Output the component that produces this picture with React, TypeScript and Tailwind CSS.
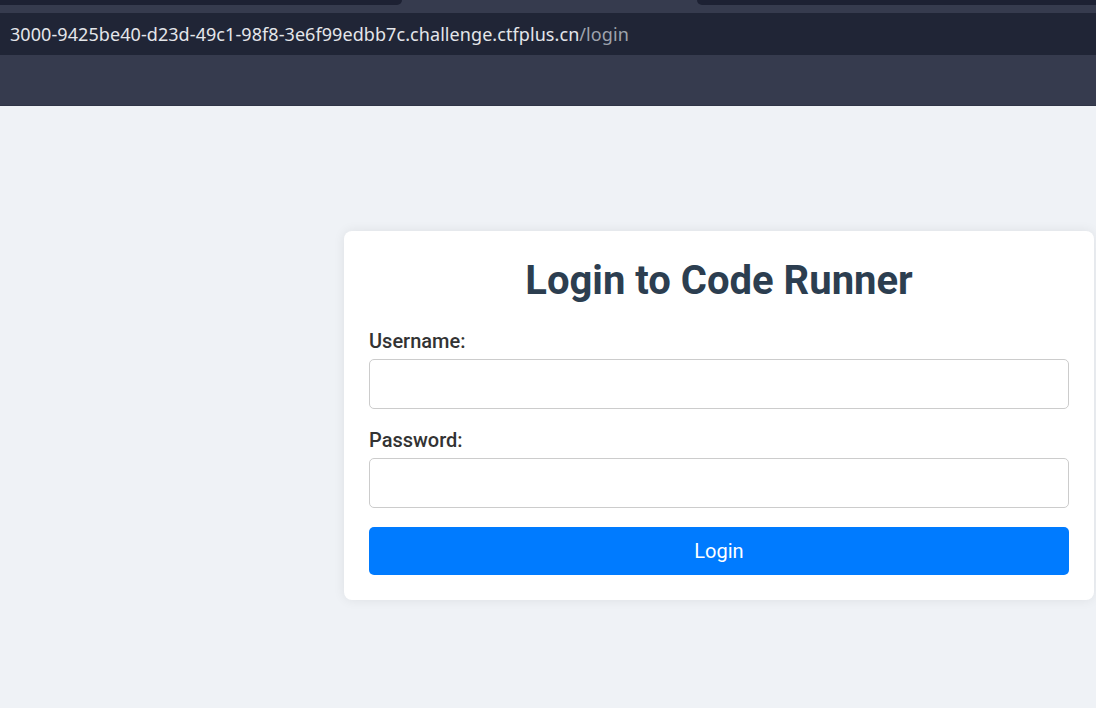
import React from "react";

const App: React.FC = () => {
  return (
    <div className="w-full min-h-screen flex flex-col bg-[#eff2f6]" style={{ fontFamily: "Roboto, 'Noto Sans', sans-serif" }}>
      {/* Browser chrome */}
      <div className="h-[13px] bg-[#363b4e] flex justify-between items-start">
        <div className="h-[5px] w-[402px] bg-[#1d2133] rounded-br-[8px]" />
        <div className="h-[5px] w-[399px] bg-[#1d2133] rounded-bl-[8px]" />
      </div>
      <div className="h-[42px] bg-[#202536] flex items-center pl-[10px]">
        <span className="text-[18px] tracking-[0.07px] text-[#e4e6ea] whitespace-nowrap" style={{ fontFamily: "'Noto Sans', sans-serif" }}>
          3000-9425be40-d23d-49c1-98f8-3e6f99edbb7c.challenge.ctfplus.cn
          <span className="text-[#9ea3ad]">/login</span>
        </span>
      </div>
      <div className="h-[51px] bg-[#363b4e] border-b border-[#2f3446]" />

      {/* Page */}
      <div className="flex-1 pt-[125px] pl-[344px]">
        <div className="w-[750px] bg-white rounded-[8px] shadow-[0_0_12px_rgba(0,0,0,0.08)] px-[25px] pt-[26px] pb-[25px]">
          <h1 className="text-[40px] leading-[47px] font-bold text-[#2c3e50] text-center mb-[26px]">
            Login to Code Runner
          </h1>

          <label className="block text-[20px] leading-[23px] font-medium text-[#333333] mb-[6px]">
            Username:
          </label>
          <input
            type="text"
            className="block w-full h-[50px] border border-[#cccccc] rounded-[5px] bg-white px-3 outline-none"
          />

          <label className="block text-[20px] leading-[23px] font-medium text-[#333333] mt-[20px] mb-[6px]">
            Password:
          </label>
          <input
            type="password"
            className="block w-full h-[50px] border border-[#cccccc] rounded-[5px] bg-white px-3 outline-none"
          />

          <button className="mt-[19px] w-full h-[48px] rounded-[5px] bg-[#007bff] text-white text-[20px]">
            Login
          </button>
        </div>
      </div>
    </div>
  );
};

export default App;
